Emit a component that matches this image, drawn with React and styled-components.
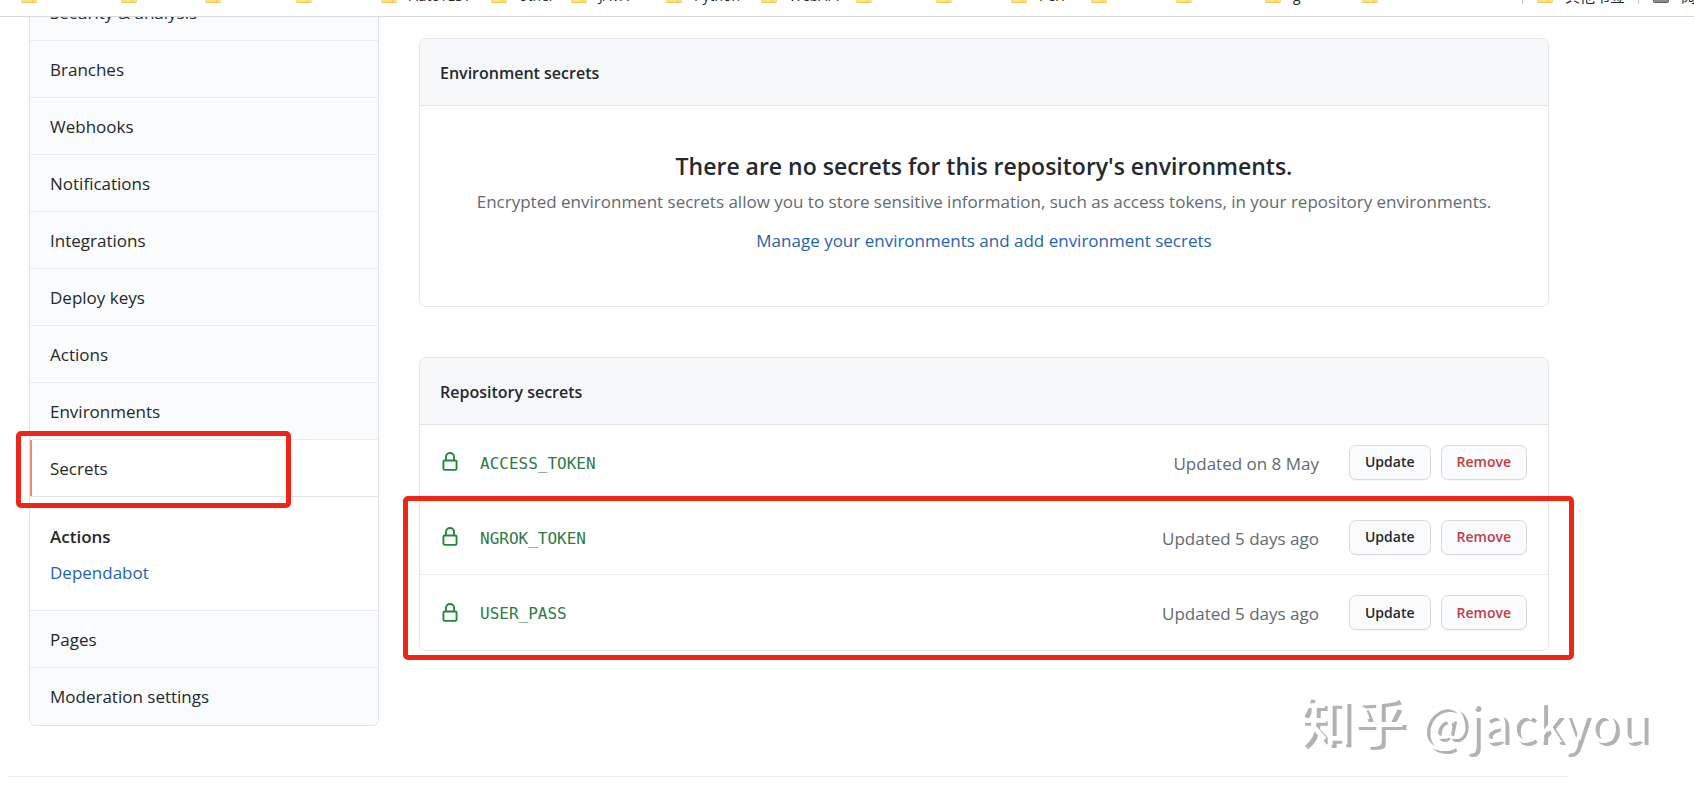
import React from "react";
import styled, { createGlobalStyle, css } from "styled-components";

const GlobalStyle = createGlobalStyle`
  *, *::before, *::after { box-sizing: border-box; }
  body {
    margin: 0;
    background: #fff;
    color: #24292e;
    font-family: "Open Sans", "Noto Sans CJK SC", sans-serif;
    font-size: 17px;
    line-height: 26px;
  }
  h2, h3, p, ul { margin: 0; padding: 0; }
  ul { list-style: none; }
`;

/* Bookmarks bar, scrolled almost out of view */
const BookmarksBar = styled.div`
  display: flex;
  align-items: flex-end;
  height: 17px;
  padding-bottom: 4px;
  overflow: hidden;
  border-bottom: 1px solid #d8d9db;
`;

const BookmarkList = styled.ul`
  display: flex;
  flex: 1;
  padding-left: 21px;
`;

const Bookmark = styled.li`
  display: flex;
  flex: none;
  align-items: flex-start;
  gap: 12px;
  width: ${({ $width }) => $width}px;
  height: 24px;
  font-size: 14px;
  line-height: 16px;
  white-space: nowrap;
`;

const OtherBookmarks = styled.div`
  display: flex;
  flex: none;
`;

const OtherBookmark = styled(Bookmark).attrs({ as: "div" })`
  height: 16px;
  padding-left: 14px;
  margin-bottom: 8px;
  border-left: 1px solid #c4c6c9;
  font-size: 15px;
`;

const FolderShape = styled.svg`
  flex: none;
  width: 16px;
  height: 14px;
  margin-top: 1px;
`;

const Page = styled.div`
  margin: 0 125px 24px 9px;
`;

const Columns = styled.div`
  display: flex;
  align-items: flex-start;
  gap: 40px;
  padding: 0 20px 50px;
`;

const Menu = styled.nav`
  flex: none;
  width: 350px;
  border: 1px solid #e1e4e8;
  border-top: 0;
  border-radius: 0 0 7px 7px;
`;

const MenuItem = styled.a`
  position: relative;
  display: block;
  height: 57px;
  padding: 16px 20px 14px;
  border-bottom: 1px solid #eaecef;
  background: #fafbfc;
  color: #24292e;
  text-decoration: none;

  &:last-child {
    border-bottom: 0;
    border-radius: 0 0 6px 6px;
  }

  ${({ $clipped }) =>
    $clipped &&
    css`
      display: flex;
      align-items: flex-end;
      height: 24px;
      padding: 0 20px 14px;
      overflow: hidden;
    `}

  ${({ $current }) =>
    $current &&
    css`
      border-bottom-color: #e1e4e8;
      background: #fff;
      box-shadow: inset 2px 0 0 #e58a7c;
    `}
`;

const SubMenu = styled.div`
  display: flex;
  flex-direction: column;
  gap: 10px;
  height: 114px;
  padding: 27px 20px 0;
  border-bottom: 1px solid #eaecef;
`;

const SubLink = styled.a`
  color: ${({ $current }) => ($current ? "#24292e" : "#2564ab")};
  font-weight: ${({ $current }) => ($current ? 600 : 400)};
  text-decoration: none;
`;

const Highlight = styled.span`
  position: absolute;
  border: 5px solid #ee261a;
  border-radius: 5px;
  pointer-events: none;
`;

const MenuHighlight = styled(Highlight)`
  inset: -9px 87px -12px -14px;
`;

const RowsHighlight = styled(Highlight)`
  inset: -4px -26px -10px -17px;
`;

const Main = styled.main`
  display: flex;
  flex: 1;
  flex-direction: column;
  gap: 50px;
  min-width: 0;
  padding-top: 21px;
`;

const Panel = styled.section`
  border: 1px solid #e1e4e8;
  border-radius: 7px;
`;

const PanelTitle = styled.h3`
  padding: 21px 20px 19px;
  border-bottom: 1px solid #e1e4e8;
  border-radius: 6px 6px 0 0;
  background: #f6f8fa;
  font-size: 16px;
  font-weight: 600;
  line-height: 26px;
`;

const Blank = styled.div`
  display: flex;
  flex-direction: column;
  align-items: center;
  padding: 40px 20px 52px;
  text-align: center;
`;

const BlankTitle = styled.h2`
  font-size: 23px;
  font-weight: 600;
  line-height: 40px;
`;

const BlankText = styled.p`
  padding: 3px 0 13px;
  color: #626a72;
`;

const BlankLink = styled.a`
  color: #2564ab;
  text-decoration: none;
`;

const SecretRow = styled.li`
  display: flex;
  align-items: center;
  height: 75px;
  padding: 0 21px 0 20px;
  border-bottom: ${({ $last }) => ($last ? "0" : "1px solid #eaecef")};
`;

const MarkedRows = styled.div`
  position: relative;
`;

const LockShape = styled.svg`
  flex: none;
  width: 20px;
  height: 20px;
  margin-right: 20px;
  fill: #22863a;
`;

const SecretName = styled.code`
  flex: 1;
  padding-top: 3px;
  color: #2f7a45;
  font-family: "DejaVu Sans Mono", monospace;
  font-size: 16px;
`;

const UpdatedAt = styled.span`
  margin-right: 30px;
  padding-top: 3px;
  color: #626a72;
`;

const RowButton = styled.button`
  height: 35px;
  padding: 0 15px;
  border: 1px solid #d8dadd;
  border-radius: 7px;
  background: #fafbfc;
  box-shadow: 0 1px 0 rgba(27, 31, 35, 0.04);
  color: ${({ $danger }) => ($danger ? "#c03c48" : "#24292e")};
  font-family: inherit;
  font-size: 14px;
  font-weight: 600;
  line-height: 24px;

  & + & {
    margin-left: 10px;
  }
`;

const FooterRule = styled.hr`
  height: 1px;
  margin: 0;
  border: 0;
  background: #eaecef;
`;

const Watermark = styled.div`
  position: absolute;
  right: 45px;
  top: 684px;
  color: #fff;
  font-family: "Noto Sans CJK SC", sans-serif;
  font-size: 50px;
  line-height: 70px;
  text-shadow: 4px 3px 0 #b2b2b2;
  white-space: nowrap;
`;

const WatermarkSite = styled.span`
  margin-right: 4px;
  font-size: 53px;
  font-weight: 500;
`;

const bookmarks = [
  { width: 100 },
  { width: 84 },
  { width: 91 },
  { width: 85 },
  { width: 110, label: "AutoTEST" },
  { width: 80, label: "other" },
  { width: 95, label: "JAVA" },
  { width: 95, label: "Python" },
  { width: 95, label: "WebAPI" },
  { width: 80 },
  { width: 75 },
  { width: 80, label: "Perf" },
  { width: 85 },
  { width: 89 },
  { width: 97, label: "g" },
  { width: 30 },
];

const menuTop = [
  "Branches",
  "Webhooks",
  "Notifications",
  "Integrations",
  "Deploy keys",
  "Actions",
  "Environments",
];

function FolderIcon() {
  return (
    <FolderShape viewBox="0 0 16 14" aria-hidden="true">
      <path d="M1 0h5l2 2h7a1 1 0 0 1 1 1v9a2 2 0 0 1-2 2H2a2 2 0 0 1-2-2V1a1 1 0 0 1 1-1z" fill="#fbe382" />
      <path d="M0 11.5V12a2 2 0 0 0 2 2h12a2 2 0 0 0 2-2v-.5a2 2 0 0 1-2 1.500H2a2 2 0 0 1-2-1.500z" fill="#e9cb5d" />
      <path d="M11 10h1v3h-1z" fill="#efc84a" />
    </FolderShape>
  );
}

function ReadingListIcon() {
  return (
    <FolderShape viewBox="0 0 16 14" aria-hidden="true">
      <rect x="0.500" y="0.500" width="15" height="13" rx="1" fill="#8a8c90" stroke="#5c5e62" />
    </FolderShape>
  );
}

function LockIcon() {
  return (
    <LockShape viewBox="0 0 16 16" aria-hidden="true">
      <path
        fillRule="evenodd"
        d="M4 4v2h-.25A1.75 1.75 0 002 7.75v5.5c0 .966.784 1.75 1.75 1.75h8.5A1.75 1.75 0 0014 13.25v-5.5A1.75 1.75 0 0012.25 6H12V4a4 4 0 10-8 0zm6.5 2V4a2.5 2.5 0 00-5 0v2h5zM12 7.5h.25a.25.25 0 01.25.25v5.5a.25.25 0 01-.25.25h-8.5a.25.25 0 01-.25-.25v-5.5a.25.25 0 01.25-.25H12z"
      />
    </LockShape>
  );
}

function Secret({ name, updated, last }) {
  return (
    <SecretRow $last={last}>
      <LockIcon />
      <SecretName>{name}</SecretName>
      <UpdatedAt>{updated}</UpdatedAt>
      <RowButton type="button">Update</RowButton>
      <RowButton type="button" $danger>Remove</RowButton>
    </SecretRow>
  );
}

export default function App() {
  return (
    <>
      <GlobalStyle />
      <BookmarksBar>
        <BookmarkList>
          {bookmarks.map((b, i) => (
            <Bookmark key={i} $width={b.width}>
              <FolderIcon />
              {b.label}
            </Bookmark>
          ))}
        </BookmarkList>
        <OtherBookmarks>
          <OtherBookmark $width={116}>
            <FolderIcon />
            其他书签
          </OtherBookmark>
          <OtherBookmark $width={56}>
            <ReadingListIcon />
            阅读清单
          </OtherBookmark>
        </OtherBookmarks>
      </BookmarksBar>

      <Page>
        <Columns>
          <Menu aria-label="Repository settings">
            <MenuItem href="#security" $clipped>Security &amp; analysis</MenuItem>
            {menuTop.map((item) => (
              <MenuItem key={item} href={`#${item}`}>{item}</MenuItem>
            ))}
            <MenuItem href="#secrets" $current aria-current="page">
              Secrets
              <MenuHighlight />
            </MenuItem>
            <SubMenu>
              <SubLink href="#secrets-actions" $current>Actions</SubLink>
              <SubLink href="#secrets-dependabot">Dependabot</SubLink>
            </SubMenu>
            <MenuItem href="#pages">Pages</MenuItem>
            <MenuItem href="#moderation">Moderation settings</MenuItem>
          </Menu>

          <Main>
            <Panel>
              <PanelTitle>Environment secrets</PanelTitle>
              <Blank>
                <BlankTitle>There are no secrets for this repository's environments.</BlankTitle>
                <BlankText>
                  Encrypted environment secrets allow you to store sensitive information, such as
                  access tokens, in your repository environments.
                </BlankText>
                <BlankLink href="#environments">
                  Manage your environments and add environment secrets
                </BlankLink>
              </Blank>
            </Panel>

            <Panel>
              <PanelTitle>Repository secrets</PanelTitle>
              <ul>
                <Secret name="ACCESS_TOKEN" updated="Updated on 8 May" />
              </ul>
              <MarkedRows>
                <ul>
                  <Secret name="NGROK_TOKEN" updated="Updated 5 days ago" />
                  <Secret name="USER_PASS" updated="Updated 5 days ago" last />
                </ul>
                <RowsHighlight />
              </MarkedRows>
            </Panel>
          </Main>
        </Columns>
        <FooterRule />
      </Page>
      <Watermark>
        <WatermarkSite>知乎</WatermarkSite> @jackyou
      </Watermark>
    </>
  );
}
